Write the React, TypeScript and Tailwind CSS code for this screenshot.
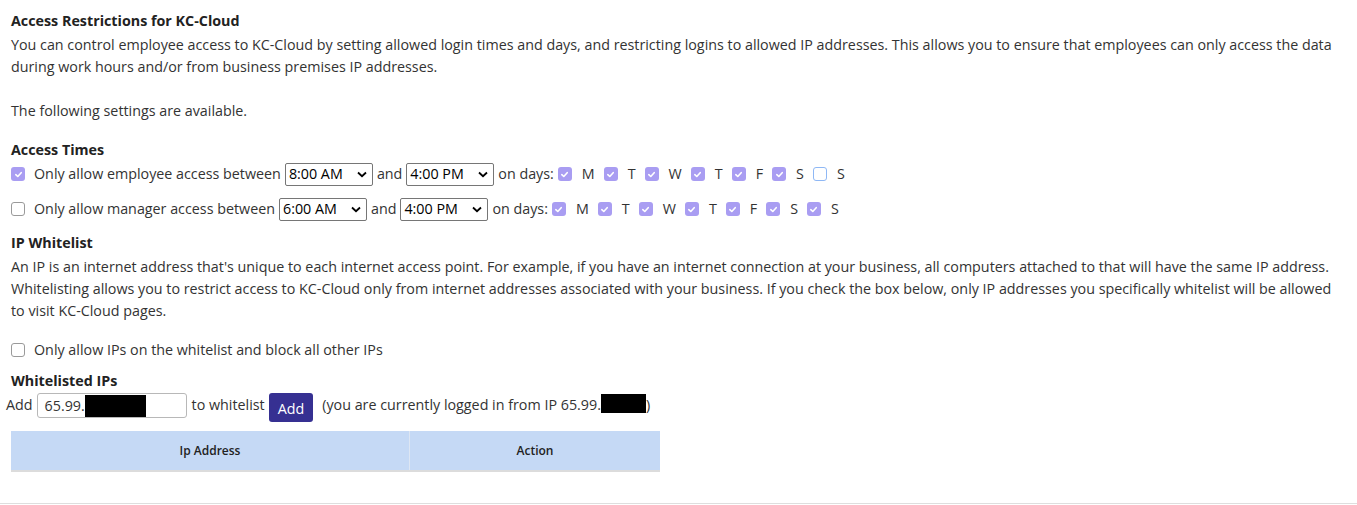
import React from "react";

const Check = ({ on, focus }: { on?: boolean; focus?: boolean }) =>
  on ? (
    <span className="inline-flex h-[14px] w-[14px] shrink-0 items-center justify-center rounded-[3px] bg-[#a99df2]">
      <svg width="9" height="9" viewBox="0 0 10 10">
        <path d="M2 5.2 L4.2 7.2 L8 3" fill="none" stroke="white" strokeWidth="1.8" strokeLinecap="round" strokeLinejoin="round" />
      </svg>
    </span>
  ) : (
    <span
      className={
        "inline-block h-[14px] w-[14px] shrink-0 rounded-[3px] border bg-white " +
        (focus ? "border-[#8fb8f5]" : "border-[#9a9a9a]")
      }
    />
  );

const Sel = ({ v }: { v: string }) => (
  <span className="mx-[4px] inline-flex h-[23px] w-[88px] items-center justify-between rounded-[2px] border border-[#767676] bg-white pl-[3px] pr-[5px] text-black">
    <span>{v}</span>
    <svg width="10" height="7" viewBox="0 0 10 7">
      <path d="M1 1.5 L5 5.2 L9 1.5" fill="none" stroke="black" strokeWidth="1.8" />
    </svg>
  </span>
);

const Days = ({ s7 }: { s7: boolean }) => {
  const d = ["M", "T", "W", "T", "F", "S", "S"];
  return (
    <span className="ml-[4px] inline-flex items-center gap-[9px]">
      {d.map((x, i) => (
        <span key={i} className="inline-flex items-center">
          <Check on={i < 6 || s7} focus={i === 6 && !s7} />
          <span className="ml-[10px]">{x}</span>
        </span>
      ))}
    </span>
  );
};

export default function App() {
  return (
    <div
      className="min-h-[505px] w-full bg-white text-[14.3px] leading-[22px] text-[#333]"
      style={{ fontFamily: "'Open Sans', 'Noto Sans', sans-serif" }}
    >
      <div className="border-b border-[#dedede] pb-[31px]">
        <div className="pl-[11px] pt-[10px]">
          <div className="font-bold text-[#222]">Access Restrictions for KC-Cloud</div>
          <p className="mt-[2px] pr-[20px]">
            You can control employee access to KC-Cloud by setting allowed login times and days, and restricting logins to allowed IP addresses. This allows you to ensure that employees can only access the data during work hours and/or from business premises IP addresses.
            <br />
            <br />
            The following settings are available.
          </p>
          <div className="mt-[17px] font-bold text-[#222]">Access Times</div>
          <div className="mt-[2px] flex h-[22px] items-center">
            <Check on />
            <span className="ml-[9px]">Only allow employee access between</span>
            <Sel v="8:00 AM" />
            <span>and</span>
            <Sel v="4:00 PM" />
            <span>on days:</span>
            <Days s7={false} />
          </div>
          <div className="mt-[13px] flex h-[22px] items-center">
            <Check />
            <span className="ml-[9px]">Only allow manager access between</span>
            <Sel v="6:00 AM" />
            <span>and</span>
            <Sel v="4:00 PM" />
            <span>on days:</span>
            <Days s7 />
          </div>
          <div className="mt-[12px] font-bold text-[#222]">IP Whitelist</div>
          <p className="mt-[2px] pr-[20px]">
            An IP is an internet address that's unique to each internet access point. For example, if you have an internet connection at your business, all computers attached to that will have the same IP address. Whitelisting allows you to restrict access to KC-Cloud only from internet addresses associated with your business. If you check the box below, only IP addresses you specifically whitelist will be allowed to visit KC-Cloud pages.
          </p>
          <div className="mt-[17px] flex h-[22px] items-center">
            <Check />
            <span className="ml-[9px]">Only allow IPs on the whitelist and block all other IPs</span>
          </div>
        </div>
        <div className="mt-[9px] pl-[11px] font-bold text-[#222]">Whitelisted IPs</div>
        <div className="mt-[1px] flex items-start pl-[6px] leading-[24px]">
          <span>Add</span>
          <span className="ml-[4px] flex h-[25px] w-[150px] items-center rounded-[3px] border border-[#b8b8b8] pl-[7px]">
            <span>65.99.</span>
            <span className="inline-block h-[22px] w-[61px] bg-black" />
          </span>
          <span className="ml-[5px]">to whitelist</span>
          <button className="ml-[4px] h-[29px] rounded-[3px] bg-[#363092] px-[9px] pt-[2px] text-white">
            Add
          </button>
          <span className="ml-[9px]">(you are currently logged in from IP 65.99.</span>
          <span className="mt-[1px] inline-block h-[19px] w-[45px] bg-black" />
          <span>)</span>
        </div>
        <div className="ml-[11px] mt-[9px] flex w-[649px] border-b-[2px] border-[#dcdcdc] bg-[#c5d9f5] text-[12px] font-semibold text-[#222]">
          <div className="flex h-[39px] w-[399px] items-center justify-center border-r border-[#dde6f3]">Ip Address</div>
          <div className="flex h-[39px] flex-1 items-center justify-center">Action</div>
        </div>
      </div>
    </div>
  );
}
